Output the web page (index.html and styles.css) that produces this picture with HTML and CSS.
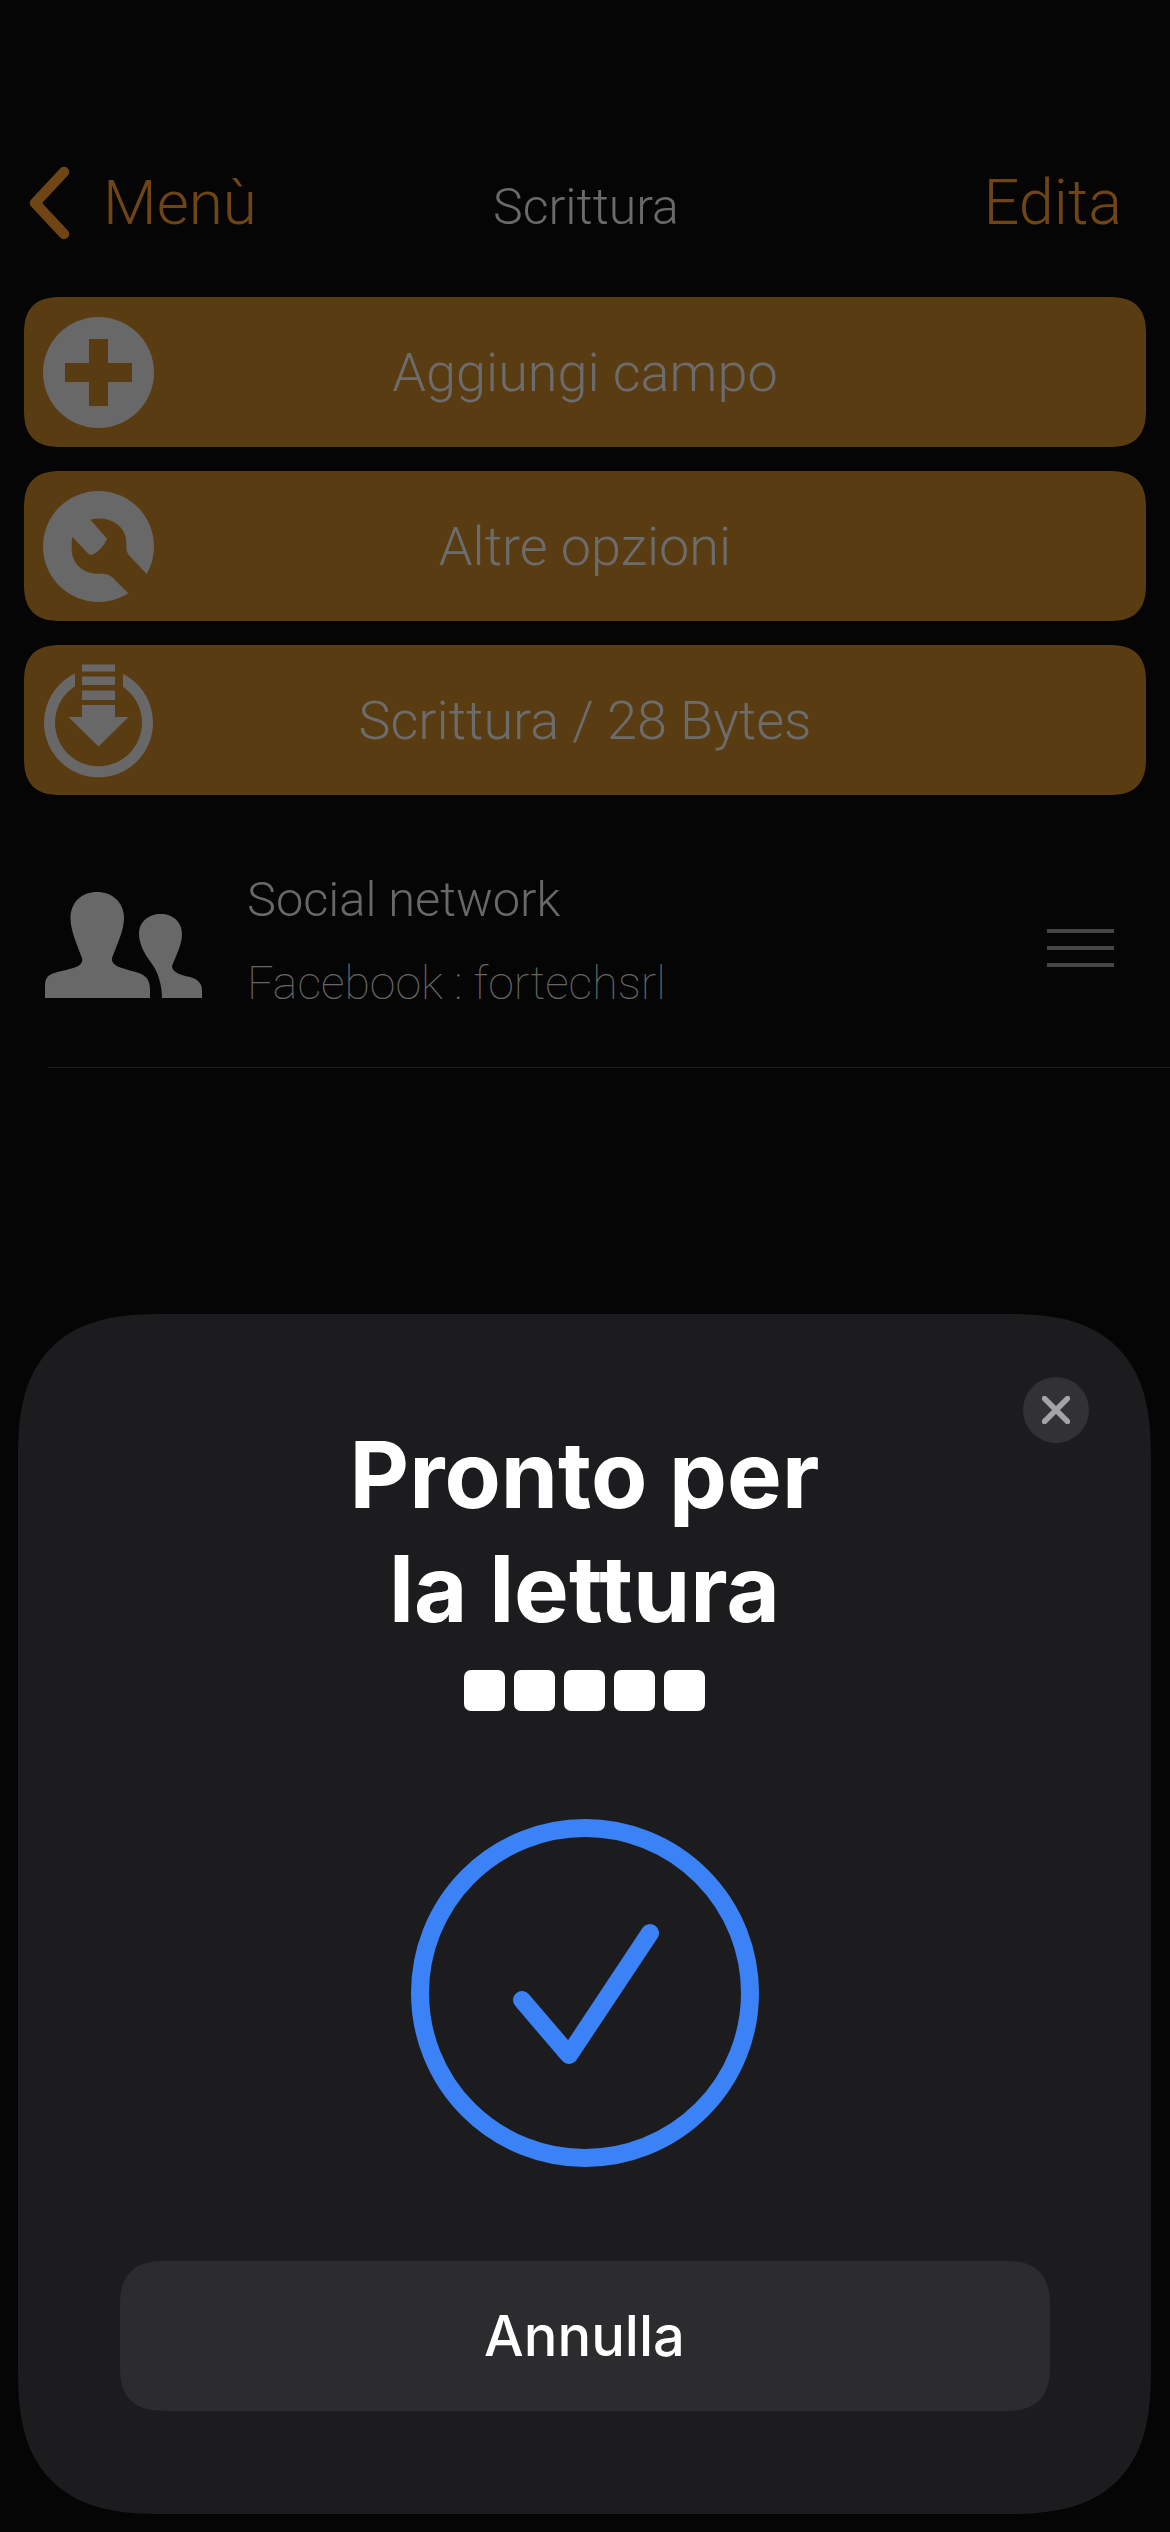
FILE: index.html
```html
<!DOCTYPE html>
<html lang="it">
<head>
<meta charset="utf-8">
<title>Scrittura</title>
<link rel="stylesheet" href="styles.css">
</head>
<body>
<div class="screen">
  <header class="nav">
    <a class="nav-back">
      <svg class="chevron" viewBox="0 0 49 74"><polyline points="39,6 10,37 39,68"/></svg>
      <span>Menù</span>
    </a>
    <h1 class="nav-title">Scrittura</h1>
    <a class="nav-edit">Edita</a>
  </header>

  <section class="actions">
    <div class="action">
      <svg class="action-icon" viewBox="0 0 111 111">
        <circle class="glyph" cx="55.5" cy="55.5" r="55.5"/>
        <path class="cut" d="M46 22h19v24h24v19H65v24H46V65H22V46h24z"/>
      </svg>
      <span>Aggiungi campo</span>
    </div>
    <div class="action">
      <svg class="action-icon" viewBox="130 92 333 333">
        <circle class="glyph" cx="296.5" cy="258.5" r="166.5"/>
        <path class="cut" d="M272 178C325 163 380 195 380 245V262C380 272 384 280 390 287L475 377L420 433L337 350C328 342 318 340 295 340C250 340 216 310 216 265C216 250 216 240 218 230L266 280C272 285 278 284 284 280C298 271 312 258 322 235Z"/>
      </svg>
      <span>Altre opzioni</span>
    </div>
    <div class="action">
      <svg class="action-icon" viewBox="0 0 111 111">
        <path class="ring" d="M38 12A49 49 0 1 0 73 12"/>
        <path class="cut" d="M32 0H80V30H32Z"/>
        <path class="glyph" d="M39 -0.500H72V6.500H39ZM39 11.500H72V20H39ZM39 25.500H72V35H39ZM39 40H72V52H85.500L55.500 81.500L25.500 52H39Z"/>
      </svg>
      <span>Scrittura / 28 Bytes</span>
    </div>
  </section>

  <section class="field">
    <svg class="field-icon" viewBox="45 892 157 106">
      <path class="glyph" d="M45 998V985C45 975 52 973 62 971C74 968 84 966 82 958C76 942 70.500 930 70.500 918C70.500 902 82 892 97 892C112 892 124 902 124 918C124 930 118 942 112 958C111 966 122 968 132 971C145 974 150 978 150 990V998Z"/>
      <path class="glyph" d="M162 998C162 985 158 972 152 964C146 956 139 945 139 934C139 922 148 914 161 914C173 914 182 922 182 934C182 945 176 955 172 966C172 972 180 975 190 977C198 979 202 984 202 990V998Z"/>
    </svg>
    <div class="field-text">
      <div class="field-name">Social network</div>
      <div class="field-value">Facebook : fortechsrl</div>
    </div>
    <div class="handle"><i></i><i></i><i></i></div>
  </section>

  <aside class="sheet">
    <button class="close" aria-label="Chiudi">
      <svg viewBox="0 0 28 28"><path d="M2.500 2.500L25.500 25.500M25.500 2.500L2.500 25.500"/></svg>
    </button>
    <h2 class="sheet-title">Pronto per<br>la lettura</h2>
    <div class="dots"><i></i><i></i><i></i><i></i><i></i></div>
    <svg class="status" viewBox="0 0 348 348">
      <circle cx="174" cy="174" r="165"/>
      <polyline points="111,181 158,236 239,114"/>
    </svg>
    <button class="cancel">Annulla</button>
  </aside>
</div>
</body>
</html>
```
FILE: styles.css
```css
* { box-sizing: border-box; }
html, body { margin: 0; padding: 0; background: #050505; }
body { font-family: Roboto, "Liberation Sans", sans-serif; }
.screen {
  position: relative;
  width: 1170px;
  height: 2532px;
  overflow: hidden;
  background: #050505;
  padding-top: 160px;
}

/* Navigation */
.nav {
  display: grid;
  grid-template-columns: 1fr auto 1fr;
  align-items: center;
  height: 85px;
  padding: 0 48px 0 50px;
}
.nav-back {
  display: flex;
  align-items: center;
  gap: 40px;
  color: #6f4516;
  font-size: 62px;
  font-weight: 300;
}
.chevron { width: 49px; height: 74px; margin-left: -25px; margin-right: -11px; flex: none; }
.chevron polyline { fill: none; stroke: #6f4516; stroke-width: 10.500; stroke-linecap: round; stroke-linejoin: round; }
.nav-title { margin: 8px 0 0; color: #6a6a6a; font-size: 50px; font-weight: 300; }
.nav-edit { justify-self: end; color: #6f4516; font-size: 63px; font-weight: 300; }

/* Action buttons */
.actions {
  display: flex;
  flex-direction: column;
  gap: 24px;
  margin: 52px 24px 0;
}
.action {
  position: relative;
  display: flex;
  align-items: center;
  justify-content: center;
  height: 150px;
  border-radius: 38px;
  corner-shape: superellipse(1.4);
  background: #5a3c12;
  color: #6c6c6c;
  font-size: 54px;
  font-weight: 300;
}
.action-icon { position: absolute; left: 19px; top: 20px; width: 111px; height: 111px; overflow: visible; }
.glyph { fill: #686868; }
.cut { fill: #5a3c12; }
.ring { fill: none; stroke: #686868; stroke-width: 11; }

/* Field row */
.field {
  position: relative;
  display: flex;
  align-items: flex-start;
  height: 221px;
  margin: 52px 0 0 48px;
  border-bottom: 1px solid #1a1a1a;
  padding-top: 25px;
}
.field-icon { width: 157px; height: 106px; margin: 20px 0 0 -3px; flex: none; }
.field-text { margin-left: 45px; }
.field-name { color: #686868; font-size: 48.750px; font-weight: 300; line-height: 56px; }
.field-value { margin-top: 27px; color: #666; font-size: 46.500px; font-weight: 100; line-height: 56px; }
.handle { position: absolute; left: 999px; top: 82px; display: flex; flex-direction: column; gap: 13px; width: 67px; }
.handle i { display: block; height: 4px; background: #454545; }

/* Sheet */
.sheet {
  position: absolute;
  left: 18px;
  top: 1314px;
  width: 1133px;
  height: 1200px;
  display: flex;
  flex-direction: column;
  align-items: center;
  padding-top: 104px;
  border-radius: 145px;
  corner-shape: superellipse(1.4);
  background: #1c1c1e;
}
.close {
  position: absolute;
  right: 62px;
  top: 63px;
  display: flex;
  align-items: center;
  justify-content: center;
  width: 66px;
  height: 66px;
  padding: 0;
  border: 0;
  border-radius: 50%;
  background: #323236;
}
.close svg { width: 28px; height: 28px; }
.close path { fill: none; stroke: #a4a4a8; stroke-width: 5.500; stroke-linecap: round; }
.sheet-title {
  margin: 0;
  color: #fff;
  font-family: Inter, "Liberation Sans", sans-serif;
  font-size: 92px;
  font-weight: 700;
  line-height: 114px;
  text-align: center;
  font-variant-ligatures: none;
  font-feature-settings: "calt" 0, "liga" 0;
}
.dots { display: flex; gap: 9px; margin-top: 24px; }
.dots i { display: block; width: 41px; height: 41px; border-radius: 7px; background: #fff; }
.status { width: 348px; height: 348px; margin-top: 108px; }
.status circle, .status polyline { fill: none; stroke: #3b82f7; stroke-width: 18; }
.status polyline { stroke-linecap: round; stroke-linejoin: round; }
.cancel {
  width: 930px;
  height: 150px;
  margin-top: 94px;
  border: 0;
  border-radius: 46px;
  corner-shape: superellipse(1.4);
  background: #2c2c2e;
  color: #fff;
  font-family: Inter, "Liberation Sans", sans-serif;
  font-size: 56px;
  font-weight: 500;
}
```
